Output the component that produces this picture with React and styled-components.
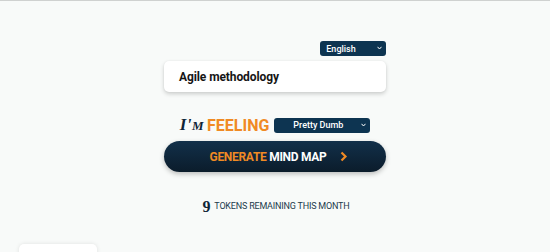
import React from "react";
import styled, { createGlobalStyle } from "styled-components";

const Global = createGlobalStyle`
  html, body { margin: 0; padding: 0; }
  body {
    background: #f8faf9;
    font-family: Roboto, "Liberation Sans", sans-serif;
    height: 252px;
    overflow: hidden;
  }
`;

const Page = styled.div`
  height: 252px;
  border-top: 1px solid #cfd1d0;
  box-sizing: border-box;
  display: flex;
  flex-direction: column;
  align-items: center;
  position: relative;
  overflow: hidden;
`;

const Column = styled.div`
  width: 222px;
  margin-top: 40px;
  display: flex;
  flex-direction: column;
  align-items: stretch;
`;

const LangRow = styled.div`
  display: flex;
  justify-content: flex-end;
`;

const Select = styled.div`
  width: ${(p) => p.$w}px;
  height: 15px;
  background: #0d3451;
  color: #fff;
  border-radius: 3px;
  font-size: 9px;
  font-weight: 500;
  display: flex;
  align-items: center;
  justify-content: center;
  position: relative;
  box-sizing: border-box;
  padding-right: ${(p) => p.$pr}px;
  svg { position: absolute; right: 4px; top: 5px; }
`;

const InputCard = styled.div`
  margin-top: 5px;
  height: 31px;
  background: #fff;
  border-radius: 5px;
  box-shadow: 0 2px 4px rgba(0,0,0,0.18), 0 0 2px rgba(0,0,0,0.06);
  display: flex;
  align-items: center;
  padding-left: 15px;
  font-size: 12px;
  font-weight: 700;
  color: #151515;
  letter-spacing: -0.1px;
`;

const FeelRow = styled.div`
  margin-top: 23px;
  display: flex;
  align-items: center;
  justify-content: center;
  gap: 3px;
`;

const Im = styled.span`
  font-family: "Liberation Serif", serif;
  font-style: italic;
  font-weight: 700;
  font-size: 17px;
  color: #0f2436;
  letter-spacing: 0.5px;
  small { font-size: 13px; }
`;

const Feeling = styled.span`
  font-size: 16px;
  font-weight: 700;
  color: #f08a24;
  margin-right: 2px;
`;

const GenButton = styled.div`
  margin-top: 6px;
  height: 31px;
  border-radius: 16px;
  background: linear-gradient(180deg, #12304a 0%, #0b1c2b 100%);
  box-shadow: 0 2px 5px rgba(0,0,0,0.25);
  display: flex;
  align-items: center;
  justify-content: center;
  font-size: 12px;
  font-weight: 700;
  letter-spacing: -0.3px;
  color: #fff;
  padding-left: 8px;
`;

const Orange = styled.span`
  color: #f08a24;
`;

const Chevron = styled.svg`
  margin-left: 14px;
`;

const Tokens = styled.div`
  margin-top: 23px;
  display: flex;
  align-items: baseline;
  justify-content: center;
  gap: 4px;
  color: #233a4d;
  font-size: 9px;
  letter-spacing: -0.2px;
  margin-left: 2px;
`;

const Nine = styled.span`
  font-family: "Liberation Serif", serif;
  font-weight: 700;
  font-size: 16px;
  color: #0f2436;
  position: relative;
  top: 3px;
`;

const CornerCard = styled.div`
  position: absolute;
  left: 19px;
  top: 243px;
  width: 78px;
  height: 30px;
  background: #fff;
  border-radius: 5px;
  box-shadow: 0 0 4px rgba(0,0,0,0.1);
`;

const Caret = () => (
  <svg width="5" height="4" viewBox="0 0 5 4">
    <path d="M0.5 0.8 L2.5 3 L4.5 0.8" stroke="#fff" strokeWidth="1" fill="none" />
  </svg>
);

export default function App() {
  return (
    <>
      <Global />
      <Page>
        <Column>
          <LangRow>
            <Select $w={66} $pr={24}>English<Caret /></Select>
          </LangRow>
          <InputCard>Agile methodology</InputCard>
          <FeelRow>
            <Im>I'<small>M</small></Im>
            <Feeling>FEELING</Feeling>
            <Select $w={96} $pr={8}>Pretty Dumb<Caret /></Select>
          </FeelRow>
          <GenButton>
            <Orange>GENERATE</Orange>&nbsp;MIND MAP
            <Chevron width="8" height="11" viewBox="0 0 8 11">
              <path d="M1.5 1.5 L5.5 5.5 L1.5 9.5" stroke="#f08a24" strokeWidth="2.2" fill="none" />
            </Chevron>
          </GenButton>
          <Tokens>
            <Nine>9</Nine>
            <span>TOKENS REMAINING THIS MONTH</span>
          </Tokens>
        </Column>
        <CornerCard />
      </Page>
    </>
  );
}
